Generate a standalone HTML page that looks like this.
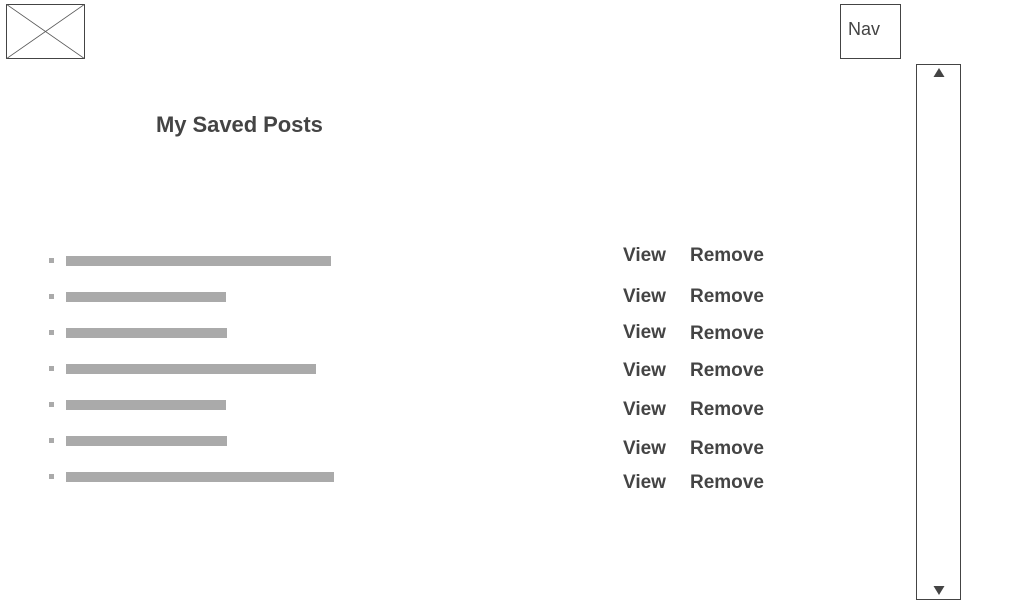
<!DOCTYPE html>
<html><head><style>
body{margin:0;width:1024px;height:600px;background:#fff;position:relative;font-family:"Liberation Sans",sans-serif;color:#444;overflow:hidden}
.a{position:absolute}
.bar{position:absolute;left:66px;height:10px;background:#aaa}
.dot{position:absolute;left:49px;width:5px;height:5px;background:#aaa}
.t{position:absolute;font-weight:bold;font-size:19px;line-height:20px}
</style></head><body>
<svg class="a" style="left:6px;top:4px" width="79" height="55"><rect x="0.5" y="0.5" width="78" height="54" fill="none" stroke="#444"/><line x1="0" y1="0" x2="79" y2="55" stroke="#555" stroke-width="0.8"/><line x1="79" y1="0" x2="0" y2="55" stroke="#555" stroke-width="0.8"/></svg>
<div class="a" style="left:840px;top:4px;width:59px;height:53px;border:1px solid #444"></div>
<div class="a" style="left:848px;top:19px;font-size:18px">Nav</div>
<div class="a" style="left:916px;top:64px;width:43px;height:534px;border:1px solid #444"></div>
<svg class="a" style="left:933px;top:68px" width="12" height="10"><path d="M6 0 L11.5 9 L0.5 9 Z" fill="#444"/></svg>
<svg class="a" style="left:933px;top:586px" width="12" height="10"><path d="M0.5 0 L11.5 0 L6 9 Z" fill="#444"/></svg>
<div class="a" style="left:156px;top:112px;font-size:22px;font-weight:bold;letter-spacing:-0.05px">My Saved Posts</div>

<div class="dot" style="top:258px"></div><div class="bar" style="top:256px;width:265px"></div>
<div class="dot" style="top:294px"></div><div class="bar" style="top:292px;width:160px"></div>
<div class="dot" style="top:330px"></div><div class="bar" style="top:328px;width:161px"></div>
<div class="dot" style="top:366px"></div><div class="bar" style="top:364px;width:250px"></div>
<div class="dot" style="top:402px"></div><div class="bar" style="top:400px;width:160px"></div>
<div class="dot" style="top:438px"></div><div class="bar" style="top:436px;width:161px"></div>
<div class="dot" style="top:474px"></div><div class="bar" style="top:472px;width:268px"></div>

<div class="t" style="left:623px;top:246px">View</div><div class="t" style="left:690px;top:246px">Remove</div>
<div class="t" style="left:623px;top:287px">View</div><div class="t" style="left:690px;top:287px">Remove</div>
<div class="t" style="left:623px;top:323px">View</div><div class="t" style="left:690px;top:324px">Remove</div>
<div class="t" style="left:623px;top:361px">View</div><div class="t" style="left:690px;top:361px">Remove</div>
<div class="t" style="left:623px;top:400px">View</div><div class="t" style="left:690px;top:400px">Remove</div>
<div class="t" style="left:623px;top:439px">View</div><div class="t" style="left:690px;top:439px">Remove</div>
<div class="t" style="left:623px;top:473px">View</div><div class="t" style="left:690px;top:473px">Remove</div>
</body></html>
